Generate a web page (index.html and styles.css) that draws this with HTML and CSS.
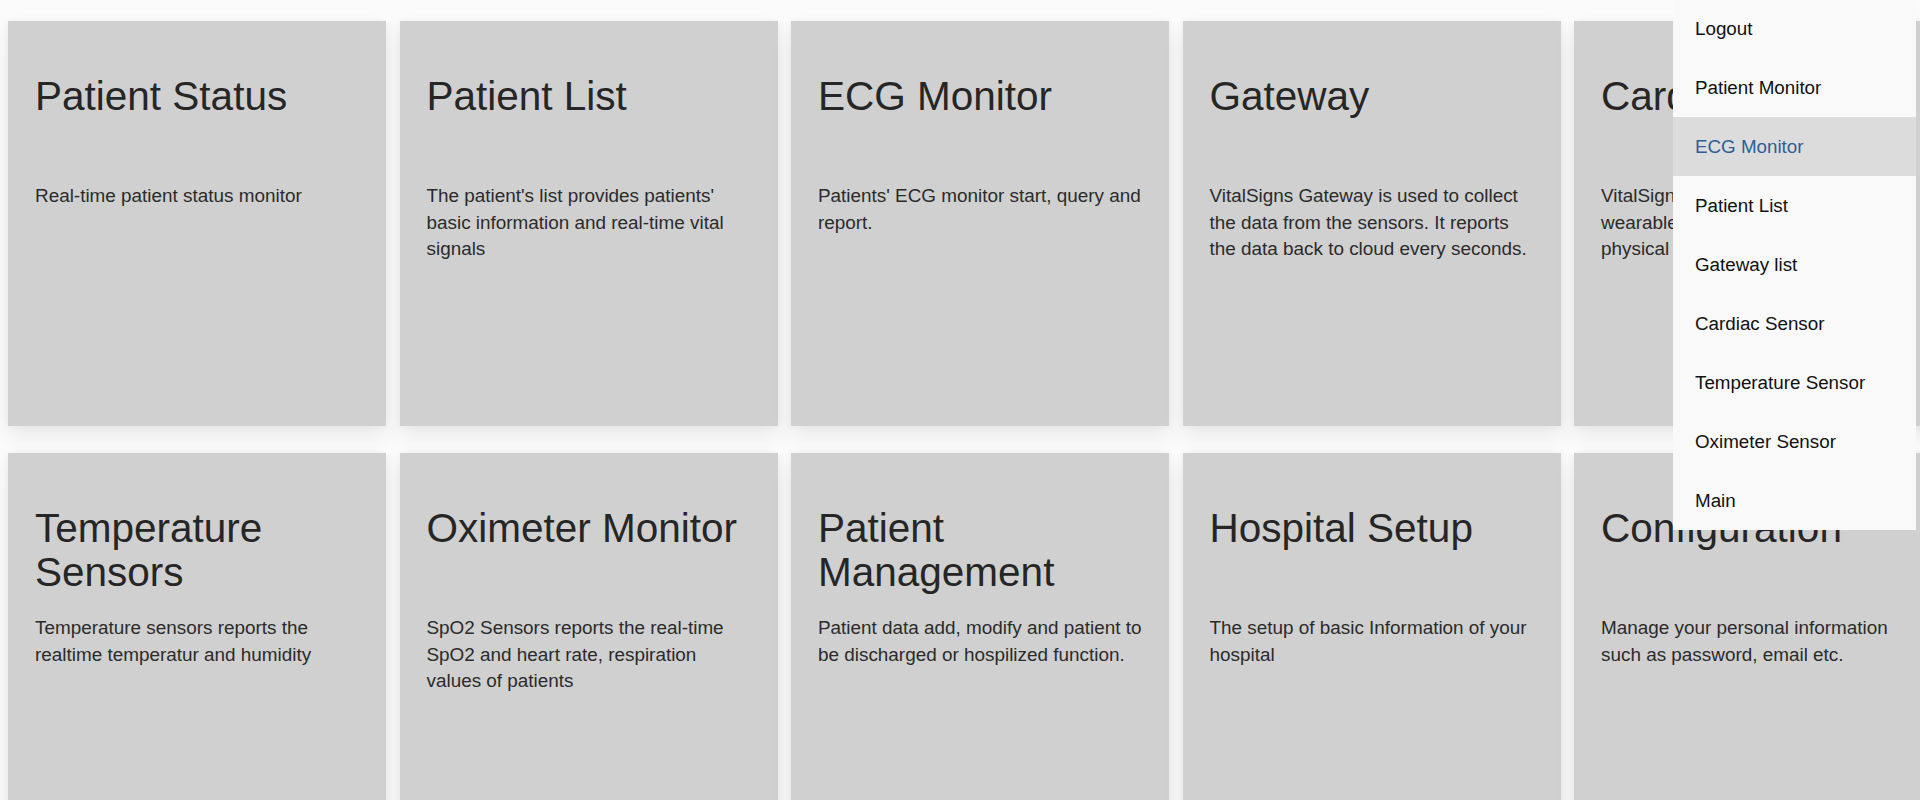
FILE: index.html
```html
<!DOCTYPE html>
<html lang="en">
<head>
    <title>VitalSigns</title>
    <link rel="stylesheet" href="styles.css">
</head>
<body>
    <div class="container">
        <div class="tiles">
            <div class="tile">
                <h1>Patient Status</h1>
                <p>Real-time patient status monitor</p>
            </div>
            <div class="tile">
                <h1>Patient List</h1>
                <p>The patient's list provides patients' basic information and real-time vital signals</p>
            </div>
            <div class="tile">
                <h1>ECG Monitor</h1>
                <p>Patients' ECG monitor start, query and report.</p>
            </div>
            <div class="tile">
                <h1>Gateway</h1>
                <p>VitalSigns Gateway is used to collect the data from the sensors. It reports the data back to cloud every seconds.</p>
            </div>
            <div class="tile">
                <h1>Cardiac Sensors</h1>
                <p>VitalSigns Cardiac Sensor is a wearable device which monitors physical signals</p>
            </div>
            <div class="tile">
                <h1>Temperature Sensors</h1>
                <p>Temperature sensors reports the realtime temperatur and humidity</p>
            </div>
            <div class="tile">
                <h1>Oximeter Monitor</h1>
                <p>SpO2 Sensors reports the real-time SpO2 and heart rate, respiration values of patients</p>
            </div>
            <div class="tile">
                <h1>Patient Management</h1>
                <p>Patient data add, modify and patient to be discharged or hospilized function.</p>
            </div>
            <div class="tile">
                <h1>Hospital Setup</h1>
                <p>The setup of basic Information of your hospital</p>
            </div>
            <div class="tile">
                <h1>Configuration</h1>
                <p>Manage your personal information such as password, email etc.</p>
            </div>
        </div>
    </div>

    <ul class="dropdown-menu">
        <li><a href="#">Logout</a></li>
        <li><a href="#">Patient Monitor</a></li>
        <li class="active"><a href="#">ECG Monitor</a></li>
        <li><a href="#">Patient List</a></li>
        <li><a href="#">Gateway list</a></li>
        <li><a href="#">Cardiac Sensor</a></li>
        <li><a href="#">Temperature Sensor</a></li>
        <li><a href="#">Oximeter Sensor</a></li>
        <li><a href="#">Main</a></li>
    </ul>
</body>
</html>
```

FILE: styles.css
```css
body {
    font-family: "Liberation Sans", Arial, Helvetica, sans-serif;
    background-color: #fbfbfb;
    margin: 0;
    overflow: hidden;
}

.container {
    padding: 21px 0 0 8px;
}

.tiles {
    display: grid;
    grid-template-columns: repeat(5, 378px);
    column-gap: 13.5px;
    row-gap: 27px;
}

.tile {
    height: 405px;
    padding: 26px 22px 26px 27px;
    box-sizing: border-box;
    background-color: #d0d0d0;
    box-shadow: 0px 10px 20px rgba(0, 0, 0, 0.07), 0px 0px 8px rgba(0, 0, 0, 0.05);
}

.tile h1 {
    font-size: 40.5px;
    font-weight: normal;
    line-height: 44px;
    height: 88px;
    margin: 27px 0 21px 0;
    color: #262626;
}

.tile p {
    font-size: 18.9px;
    line-height: 26.7px;
    margin: 0;
    color: #2b2b2b;
}

.dropdown-menu {
    position: absolute;
    top: -1px;
    right: 4px;
    width: 243px;
    margin: 0;
    padding: 0;
    list-style: none;
    background-color: #f9f9f9;
}

.dropdown-menu li a {
    display: block;
    height: 59px;
    line-height: 59px;
    padding-left: 22px;
    font-size: 18.8px;
    color: #111;
    text-decoration: none;
}

.dropdown-menu li.active a {
    background-color: #dcdcdc;
    color: #2f5d97;
}
```
